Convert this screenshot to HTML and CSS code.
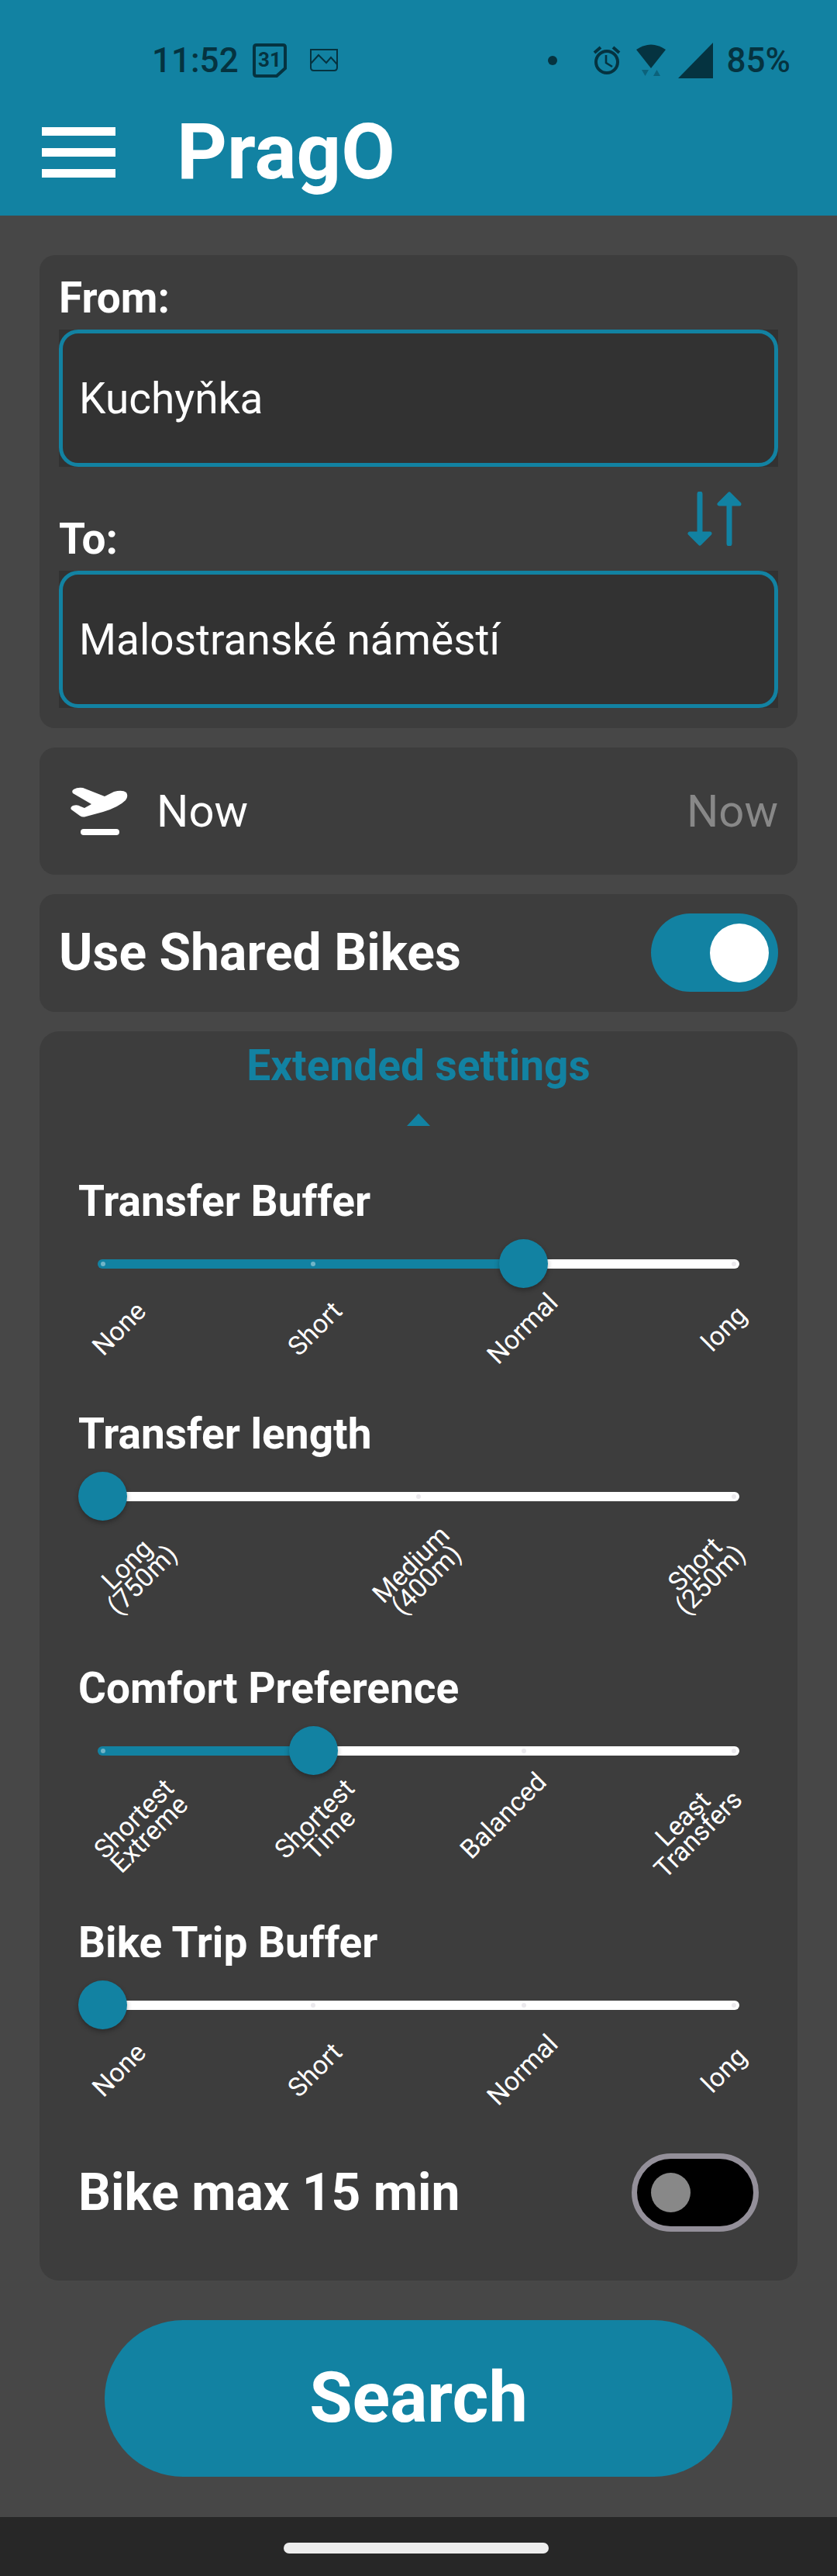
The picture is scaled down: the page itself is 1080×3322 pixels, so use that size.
FILE: index.html
```html
<!DOCTYPE html>
<html lang="en">
<head>
<meta charset="utf-8">
<meta name="viewport" content="width=device-width, initial-scale=1">
<title>PragO</title>
<link rel="stylesheet" href="styles.css">
</head>
<body>
<header class="header">
  <div class="status">
    <span class="status-text">11:52</span>
    <svg class="status-calendar" width="44" height="44" viewBox="0 0 44 44" aria-hidden="true">
      <path d="M5 2H39Q42 2 42 5V32L31 42H5Q2 42 2 39V5Q2 2 5 2Z" fill="none" stroke="currentColor" stroke-width="4"/>
      <text x="22" y="30" text-anchor="middle" class="calendar-day">31</text>
    </svg>
    <svg class="status-image" width="36" height="30" viewBox="0 0 36 30" aria-hidden="true">
      <path d="M1 1H35V24Q35 28 31 28H5Q1 28 1 24ZM1 19L11 8L21 18L27 11L35 20" fill="none" stroke="currentColor" stroke-width="2"/>
    </svg>
    <span class="status-right">
      <svg width="12" height="44" viewBox="0 0 12 44" aria-hidden="true"><circle cx="6" cy="22" r="6" fill="currentColor"/></svg>
      <svg class="status-alarm" width="36" height="44" viewBox="0 0 36 44" aria-hidden="true">
        <circle cx="18" cy="24" r="14" fill="none" stroke="currentColor" stroke-width="4"/>
        <path d="M17 15V25L25 30" fill="none" stroke="currentColor" stroke-width="2.6"/>
        <path d="M2 12L10 5M34 12L26 5" stroke="currentColor" stroke-width="4"/>
      </svg>
      <svg class="status-wifi" width="38" height="44" viewBox="0 0 38 44" aria-hidden="true">
        <path d="M0 8Q19 -5 38 8L19 32Z" fill="currentColor"/>
        <path d="M7 34H16L11.500 42ZM22 42H31L26.500 34Z" fill="currentColor" opacity=".4"/>
      </svg>
      <svg class="status-signal" width="45" height="46" viewBox="0 0 45 46" aria-hidden="true"><path d="M45 0V46H0Z" fill="currentColor"/></svg>
      <span class="status-text">85%</span>
    </span>
  </div>
  <div class="app-bar">
    <button class="menu" type="button" aria-label="Menu"><span></span><span></span><span></span></button>
    <h1 class="app-title">PragO</h1>
  </div>
</header>

<main class="content">
  <section class="card">
    <label class="field-label" for="from">From:</label>
    <div class="field"><input class="field-input" id="from" type="text" value="Kuchyňka"></div>
    <div class="field-gap">
      <label class="field-label" for="to">To:</label>
      <button class="swap" type="button" aria-label="Swap From and To">
        <svg width="70" height="70" viewBox="0 0 70 70" aria-hidden="true">
          <path d="M16 3V55M54 67V15" stroke="currentColor" stroke-width="7" stroke-linecap="round"/>
          <path d="M3 54H29L16 67ZM41 16H67L54 3Z" fill="currentColor" stroke="currentColor" stroke-width="5" stroke-linejoin="round"/>
        </svg>
      </button>
    </div>
    <div class="field"><input class="field-input" id="to" type="text" value="Malostranské náměstí"></div>
  </section>

  <button class="card departure" type="button">
    <svg width="74" height="62" viewBox="0 0 74 62" aria-hidden="true">
      <path d="M4 3Q9 0 16 1L44 12L56 6Q67 3 72 7Q75 12 71 17Q62 26 42 32L18 38.500Q15 39 12 37L1 29Q-1 26 3 24Q9 22 13 25L18 27L27 22L3 8Q1 5 4 3Z" fill="currentColor"/>
      <rect x="13" y="54" width="50" height="8" rx="4" fill="currentColor"/>
    </svg>
    <span>Now</span>
    <span class="departure-value">Now</span>
  </button>

  <section class="card switch-row">
    <label for="bikes">Use Shared Bikes</label>
    <input class="switch" id="bikes" type="checkbox" role="switch" checked>
  </section>

  <section class="card settings">
    <button class="expander" type="button" aria-expanded="true">
      Extended settings
      <svg width="30" height="16" viewBox="0 0 30 16" aria-hidden="true"><path d="M15 0L30 16H0Z" fill="currentColor"/></svg>
    </button>

    <div class="setting">
      <label for="transfer-buffer">Transfer Buffer</label>
      <div class="slider">
        <div class="track" style="--fill: 66%"><i class="on"></i><i class="on"></i><i></i><i></i></div>
        <input id="transfer-buffer" type="range" min="0" max="3" value="2">
      </div>
      <div class="marks"><span>None</span><span>Short</span><span>Normal</span><span>long</span></div>
    </div>

    <div class="setting">
      <label for="transfer-length">Transfer length</label>
      <div class="slider">
        <div class="track" style="--fill: 0%"><i></i><i></i><i></i></div>
        <input id="transfer-length" type="range" min="0" max="2" value="0">
      </div>
      <div class="marks"><span class="double">Long<br>(750m)</span><span class="double">Medium<br>(400m)</span><span class="double">Short<br>(250m)</span></div>
    </div>

    <div class="setting">
      <label for="comfort">Comfort Preference</label>
      <div class="slider">
        <div class="track" style="--fill: 33%"><i class="on"></i><i></i><i></i><i></i></div>
        <input id="comfort" type="range" min="0" max="3" value="1">
      </div>
      <div class="marks"><span class="double">Shortest<br>Extreme</span><span class="double">Shortest<br>Time</span><span>Balanced</span><span class="double">Least<br>Transfers</span></div>
    </div>

    <div class="setting">
      <label for="bike-buffer">Bike Trip Buffer</label>
      <div class="slider">
        <div class="track" style="--fill: 0%"><i></i><i></i><i></i><i></i></div>
        <input id="bike-buffer" type="range" min="0" max="3" value="0">
      </div>
      <div class="marks"><span>None</span><span>Short</span><span>Normal</span><span>long</span></div>
    </div>

    <div class="switch-row">
      <label for="bike-max">Bike max 15 min</label>
      <input class="switch" id="bike-max" type="checkbox" role="switch">
    </div>
  </section>

  <button class="search" type="button">Search</button>
</main>

<footer class="nav-bar"><div class="nav-handle"></div></footer>
</body>
</html>
```
FILE: styles.css
```css
:root {
  --accent: #1282a2;
  --page: #474747;
  --card: #3d3d3d;
  --field: #323232;
  --status: #053340;
}

* {
  box-sizing: border-box;
}

body {
  margin: 0;
  min-height: 100vh;
  display: flex;
  flex-direction: column;
  background: var(--page);
  color: #fff;
  font-family: Roboto, "Liberation Sans", sans-serif;
  font-size: 55px;
  line-height: 64px;
}

button,
input {
  margin: 0;
  padding: 0;
  border: 0;
  background: none;
  color: inherit;
  font: inherit;
}

svg {
  display: block;
  flex: none;
}

/* Header */
.header {
  background: var(--accent);
  padding: 52px 54px 22px;
}

.status {
  display: flex;
  align-items: center;
  height: 52px;
  padding: 0 6px 0 142px;
  color: var(--status);
  font-size: 44px;
  font-weight: 500;
  line-height: 52px;
}

.status-calendar {
  margin-left: 18px;
}

.calendar-day {
  fill: currentColor;
  font-size: 26px;
  font-weight: 700;
}

.status-image {
  margin-left: 30px;
}

.status-right {
  display: flex;
  align-items: center;
  margin-left: auto;
}

.status-alarm {
  margin-left: 46px;
}

.status-wifi {
  margin-left: 20px;
}

.status-signal {
  margin: 0 18px 0 16px;
}

.app-bar {
  display: flex;
  align-items: center;
  gap: 79px;
  height: 152px;
  padding-top: 32px;
}

.menu {
  display: flex;
  flex-direction: column;
  gap: 16px;
  width: 95px;
}

.menu span {
  height: 11px;
  background: #fff;
}

.app-title {
  margin: 0;
  font-size: 101px;
  font-weight: 700;
  line-height: 120px;
}

/* Cards */
.content {
  flex: 1;
  display: flex;
  flex-direction: column;
  gap: 25px;
  padding: 51px;
}

.card {
  background: var(--card);
  border-radius: 20px;
  padding: 25px 25px 26px;
}

.field-label {
  display: block;
  height: 71px;
  font-weight: 700;
  line-height: 60px;
}

.field {
  background: var(--field);
}

.field-input {
  display: block;
  width: 100%;
  height: 177px;
  padding: 0 21px;
  border: 5px solid var(--accent);
  border-radius: 25px;
}

.field-gap {
  display: flex;
  justify-content: space-between;
  align-items: flex-end;
  height: 134px;
}

.swap {
  align-self: center;
  margin-right: 47px;
  color: var(--accent);
}

.departure {
  display: flex;
  align-items: center;
  gap: 37px;
  height: 164px;
  padding-left: 40px;
  font-size: 58px;
  text-align: left;
}

.departure-value {
  margin-left: auto;
  color: #888;
}

.switch-row {
  display: flex;
  align-items: center;
  justify-content: space-between;
  font-size: 66px;
  font-weight: 700;
}

.switch {
  appearance: none;
  display: flex;
  align-items: center;
  width: 164px;
  height: 101px;
  padding: 0 18px;
  border: 7px solid #938f99;
  border-radius: 51px;
  background: #000;
}

.switch::before {
  content: "";
  width: 51px;
  height: 51px;
  border-radius: 50%;
  background: #888;
}

.switch:checked {
  justify-content: flex-end;
  padding: 0 12px;
  border: 0;
  background: var(--accent);
}

.switch:checked::before {
  width: 76px;
  height: 76px;
  background: #fff;
}

/* Extended settings */
.settings {
  border-radius: 25px;
  padding: 12px 50px 63px;
}

.settings .switch-row {
  margin-top: 4px;
}

.expander {
  display: flex;
  flex-direction: column;
  align-items: center;
  gap: 30px;
  width: 100%;
  margin-bottom: 65px;
  color: var(--accent);
  font-weight: 700;
}

.setting {
  display: flex;
  flex-direction: column;
  padding-bottom: 90px;
}

.setting label {
  font-weight: 700;
}

.slider {
  display: grid;
  align-items: center;
  margin-top: 17px;
}

.slider > * {
  grid-area: 1 / 1;
}

.track {
  display: flex;
  align-items: center;
  justify-content: space-between;
  height: 12px;
  margin: 0 25px;
  padding: 0 4px;
  border-radius: 6px;
  background: linear-gradient(to right, var(--accent) var(--fill), #fff 0);
}

.track i {
  width: 6px;
  height: 6px;
  border-radius: 50%;
  background: #ebe9ed;
}

.track .on {
  background: #70b4c7;
}

.slider input {
  appearance: none;
  width: 100%;
  height: 63px;
}

.slider input::-webkit-slider-thumb {
  appearance: none;
  width: 63px;
  height: 63px;
  border-radius: 50%;
  background: var(--accent);
  box-shadow: 0 3px 6px rgba(0, 0, 0, 0.3);
}

.marks {
  display: flex;
  justify-content: space-between;
  align-items: flex-start;
  margin-top: 38px;
  padding: 0 12px;
  font-size: 34px;
  line-height: 28px;
  text-align: center;
}

.marks span {
  transform: rotate(-45deg);
}

.marks .double {
  padding: 0 5px;
}

.search {
  width: 810px;
  max-width: 100%;
  height: 202px;
  margin: 26px auto 0;
  border-radius: 101px;
  background: var(--accent);
  font-size: 90px;
  font-weight: 700;
}

.nav-bar {
  display: flex;
  align-items: center;
  justify-content: center;
  height: 76px;
  background: #272727;
}

.nav-handle {
  width: 342px;
  height: 14px;
  margin-top: 4px;
  margin-right: 6px;
  border-radius: 7px;
  background: #ededed;
}
```
